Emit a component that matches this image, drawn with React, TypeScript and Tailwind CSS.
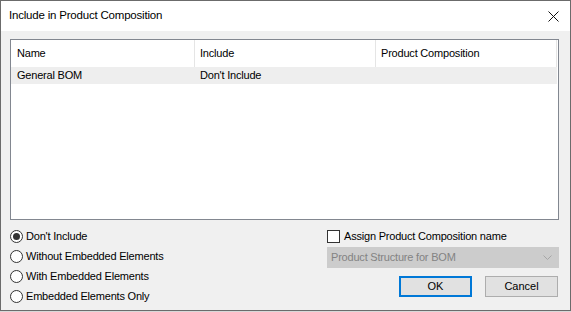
const font = { fontFamily: '"Liberation Sans", Arial, sans-serif' }

function Radio({ label, checked = false }: { label: string; checked?: boolean }) {
  return (
    <div className="flex h-[20px] items-center">
      <span className="flex h-[13px] w-[13px] items-center justify-center rounded-full border border-[#333333] bg-white">
        {checked && <span className="h-[7px] w-[7px] rounded-full bg-[#333333]" />}
      </span>
      <span className="ml-[3px] text-[11px] tracking-[-0.2px] text-black">{label}</span>
    </div>
  )
}

export default function App() {
  return (
    <div className="h-[312px] w-[571px] bg-[#d8d8d8]" style={font}>
      <div className="flex h-[311px] w-[571px] flex-col border border-[#6b6b6b] bg-[#f0f0f0]">
        {/* title bar */}
        <div className="flex h-[30px] shrink-0 items-center justify-between bg-white pl-[8px] pr-[10px]">
          <span className="text-[11.5px] tracking-[-0.2px] text-black">Include in Product Composition</span>
          <svg width="11" height="11" viewBox="0 0 11 11" className="mr-[1px]">
            <path d="M0.5 0.5L10.5 10.5M10.5 0.5L0.5 10.5" stroke="#111" strokeWidth="1" />
          </svg>
        </div>

        <div className="flex flex-1 flex-col pl-[9px] pr-[11px] pt-[8px]">
          {/* list view */}
          <div className="h-[181px] border border-[#828790] bg-white">
            <div className="flex h-[27px] text-[11px] tracking-[-0.2px] text-black">
              <div className="flex w-[183px] items-center pl-[6px]">Name</div>
              <div className="w-px bg-[#e5e5e5]" />
              <div className="flex w-[180px] items-center pl-[5px]">Include</div>
              <div className="w-px bg-[#e5e5e5]" />
              <div className="flex w-[180px] items-center pl-[5px]">Product Composition</div>
              <div className="w-px bg-[#e5e5e5]" />
            </div>
            <div className="flex h-[17px] w-[546px] items-center bg-[#eeeeee] text-[11px] tracking-[-0.2px] text-black">
              <div className="w-[184px] pl-[6px]">General BOM</div>
              <div className="pl-[5px]">Don't Include</div>
            </div>
          </div>

          {/* options */}
          <div className="mt-[1px] flex justify-between">
            <div className="pt-[5px]">
              <Radio label="Don't Include" checked />
              <Radio label="Without Embedded Elements" />
              <Radio label="With Embedded Elements" />
              <Radio label="Embedded Elements Only" />
            </div>
            <div className="flex w-[232px] flex-col pt-[9px]">
              <div className="flex h-[13px] items-center">
                <span className="h-[13px] w-[13px] border border-[#333333] bg-white" />
                <span className="ml-[4px] text-[11px] tracking-[-0.2px] text-black">Assign Product Composition name</span>
              </div>
              <div className="mt-[4px] flex h-[21px] items-center justify-between border border-[#cccccc] bg-[#cccccc] pl-[3px] pr-[6px]">
                <span className="text-[11px] tracking-[-0.2px] text-[#838383]">Product Structure for BOM</span>
                <svg width="9" height="5" viewBox="0 0 9 5">
                  <path d="M0.5 0.5L4.5 4.5L8.5 0.5" stroke="#a6a6a6" fill="none" />
                </svg>
              </div>
              <div className="mt-[8px] flex justify-end gap-[13px] pr-[1px]">
                <button className="h-[21px] w-[73px] border-2 border-[#0078d7] bg-[#e1e1e1] text-[11px] text-black">
                  OK
                </button>
                <button className="h-[21px] w-[73px] border border-[#adadad] bg-[#e1e1e1] text-[11px] text-black">
                  Cancel
                </button>
              </div>
            </div>
          </div>
        </div>
      </div>
    </div>
  )
}
